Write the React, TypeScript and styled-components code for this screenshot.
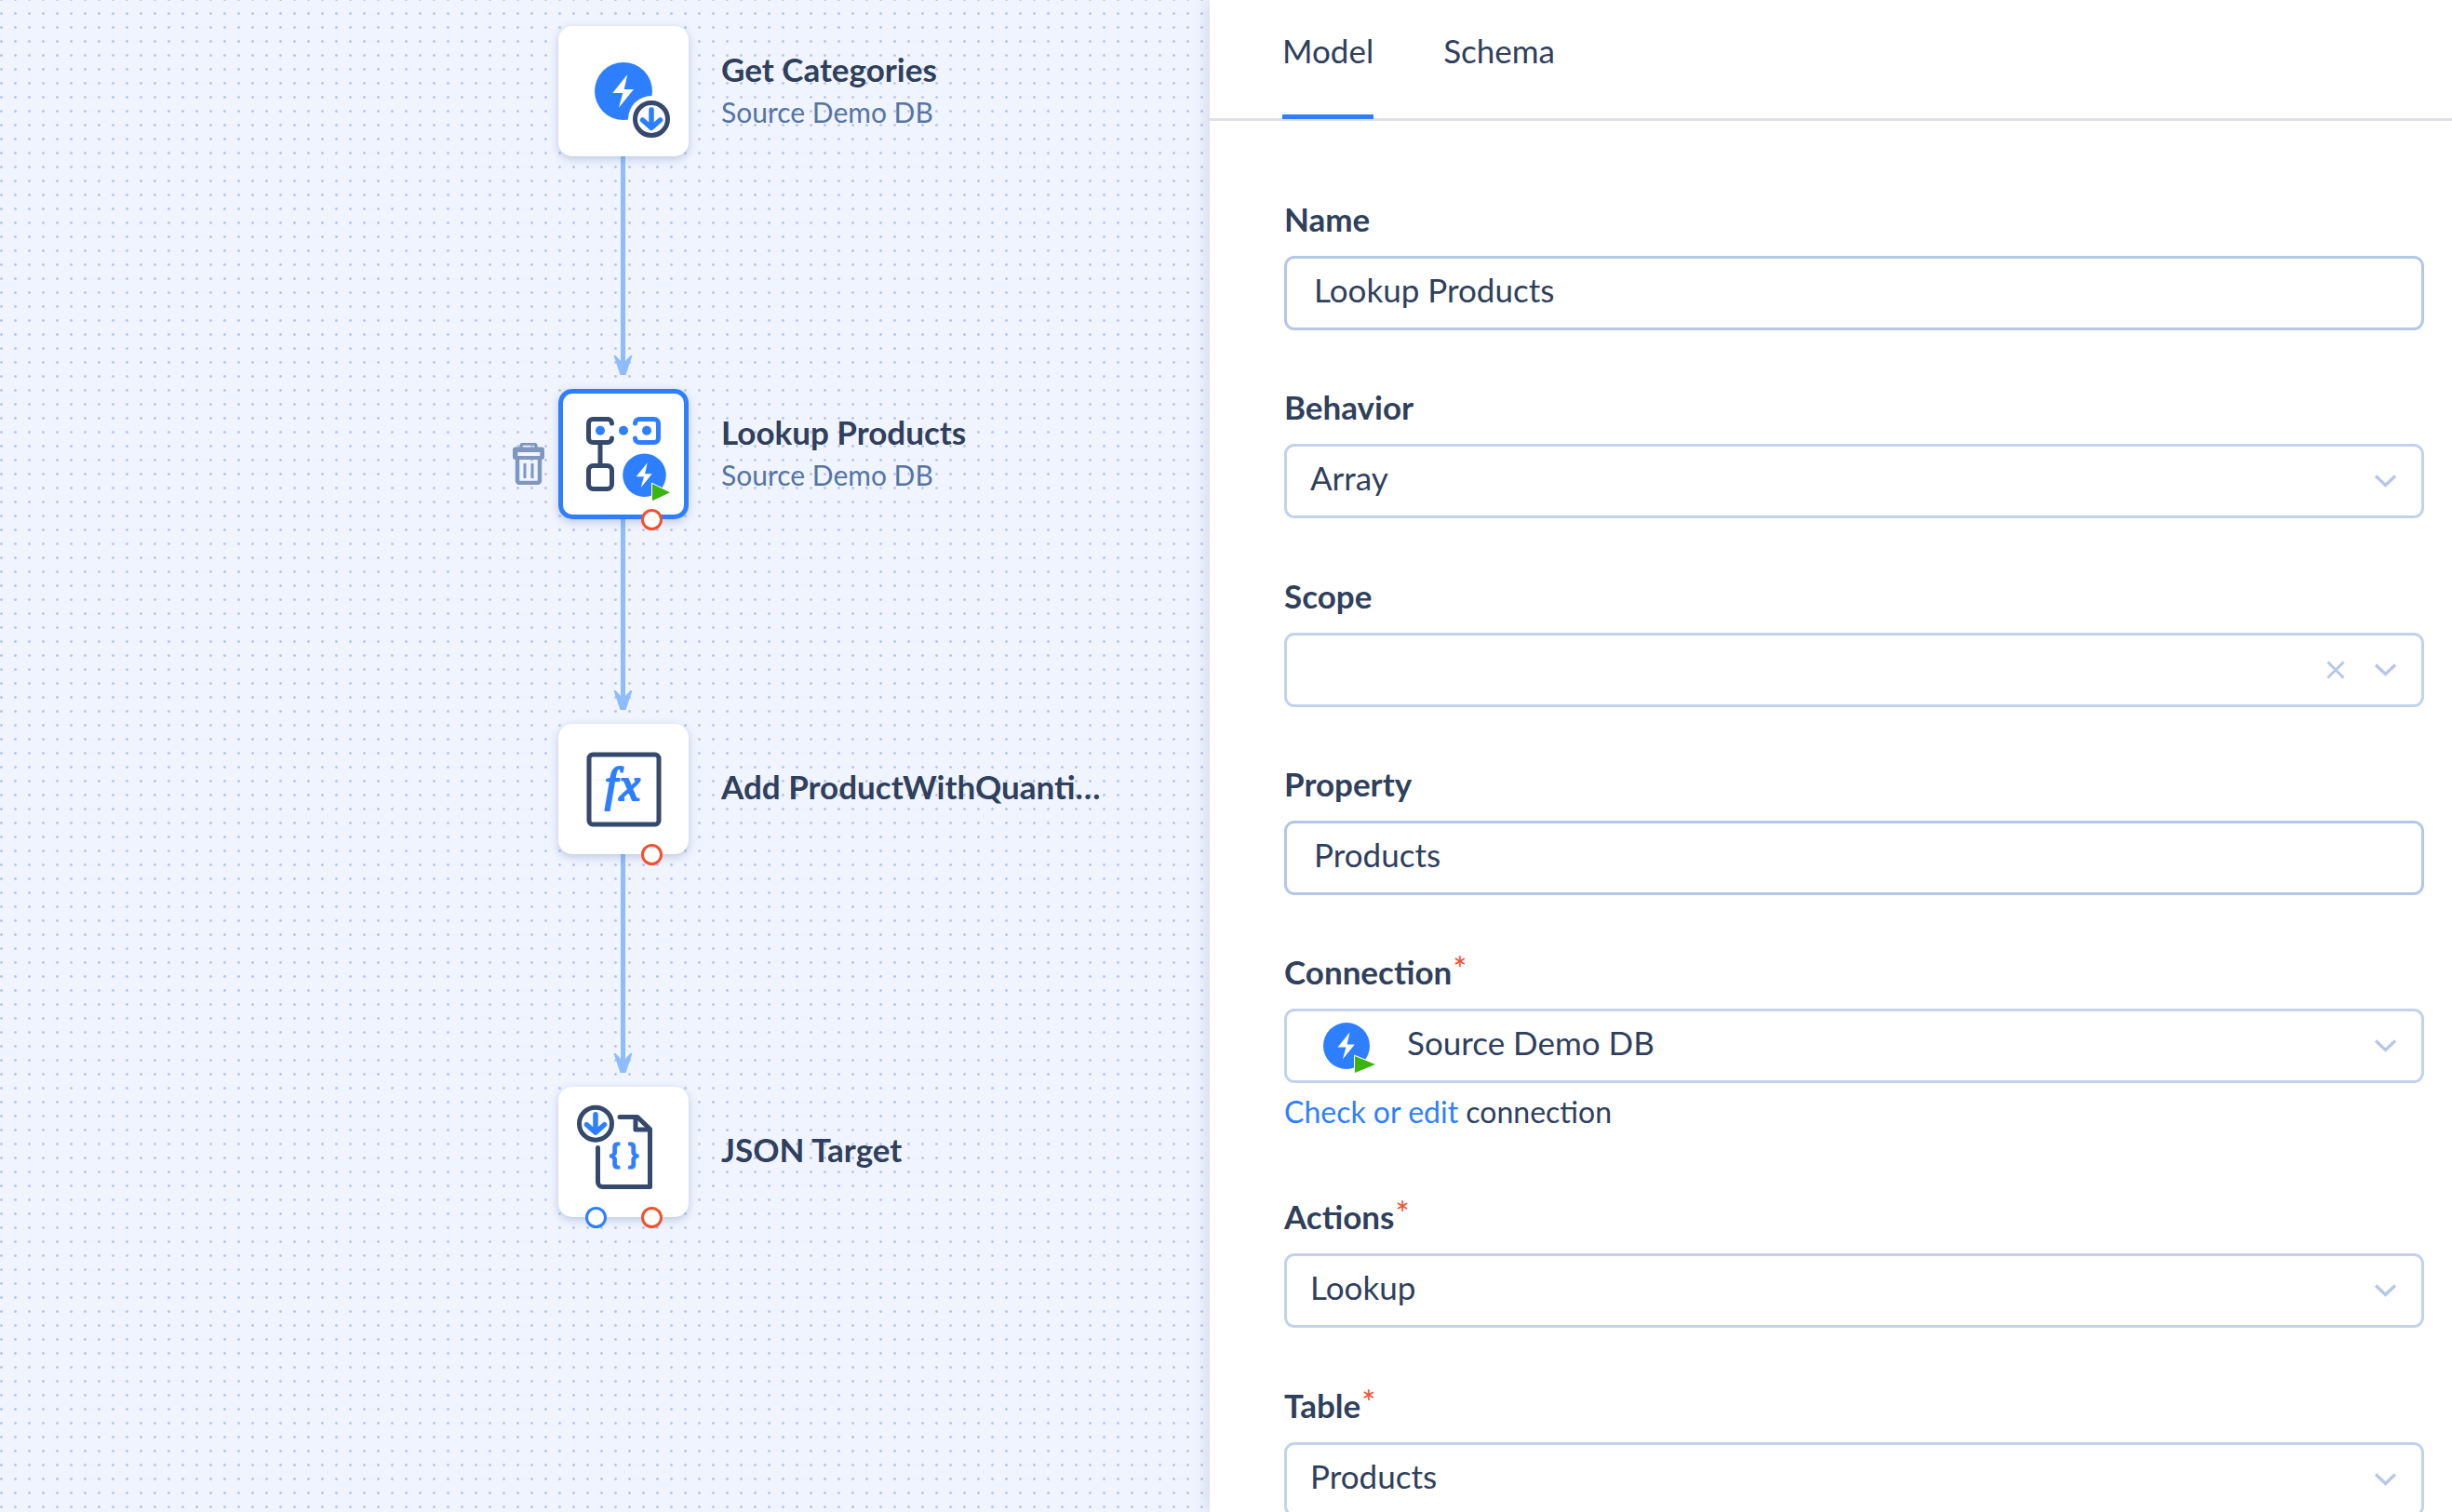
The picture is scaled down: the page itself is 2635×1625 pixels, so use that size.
import React from 'react';
import styled, { createGlobalStyle } from 'styled-components';

const GlobalStyle = createGlobalStyle`
  html, body {
    margin: 0;
    padding: 0;
    background: #ffffff;
  }
  body {
    font-family: Lato, "Open Sans", sans-serif;
    color: #2b3a55;
  }
`;

const Page = styled.div`
  width: 2635px;
  height: 1625px;
  display: flex;
  overflow: hidden;
`;

const Canvas = styled.div`
  width: 1300px;
  height: 1625px;
  flex: none;
  padding-top: 28px;
  box-sizing: border-box;
  background-color: #eff4ff;
  background-image: radial-gradient(circle, #b8c8ea 1.1px, transparent 1.7px);
  background-size: 15px 15px;
  background-position: 9px 7px;
`;

const NodeRow = styled.div`
  display: grid;
  grid-template-columns: 600px 140px 1fr;
  align-items: center;
  height: 140px;
`;

const TrashSlot = styled.div`
  justify-self: end;
  margin: 20px 15px 0 0;
  display: flex;
`;

const Node = styled.div<{ $selected?: boolean }>`
  position: relative;
  width: 140px;
  height: 140px;
  border-radius: 15px;
  background: #ffffff;
  box-shadow: ${(p) => (p.$selected ? 'inset 0 0 0 5px #2e7fff, ' : '')}0 3px 10px rgba(60, 85, 140, 0.28);
  z-index: 1;

  svg {
    display: block;
  }
`;

const Port = styled.span<{ $left: number; $color: string }>`
  position: absolute;
  left: ${(p) => p.$left - 11.5}px;
  bottom: -11.5px;
  width: 23px;
  height: 23px;
  box-sizing: border-box;
  border-radius: 50%;
  border: 3px solid ${(p) => p.$color};
  background: #ffffff;
`;

const Label = styled.div<{ $single?: boolean }>`
  margin-left: 35px;
  padding-bottom: ${(p) => (p.$single ? 6 : 2)}px;
  min-width: 0;
  display: flex;
  flex-direction: column;
`;

const NodeTitle = styled.div`
  font-size: 35px;
  line-height: 46px;
  font-weight: 700;
  color: #2f3f5c;
  white-space: nowrap;
`;

const NodeSubtitle = styled.div`
  font-size: 30px;
  line-height: 46px;
  color: #5674a3;
`;

const ConnectorRow = styled.div<{ $height: number }>`
  height: ${(p) => p.$height}px;
  padding-left: 658px;

  svg {
    display: block;
  }
`;

const Panel = styled.div`
  flex: 1;
  position: relative;
  background: #ffffff;
  box-shadow: -4px 0 14px rgba(60, 85, 140, 0.15);
`;

const Tabs = styled.div`
  height: 127px;
  box-sizing: content-box;
  padding-left: 78px;
  display: flex;
  gap: 75px;
  border-bottom: 3px solid #dfe2ea;
`;

const Tab = styled.div<{ $active?: boolean }>`
  height: 128px;
  box-sizing: border-box;
  padding-top: 30px;
  font-size: 35px;
  line-height: 48px;
  color: #2f3f5c;
  border-bottom: 5px solid ${(p) => (p.$active ? '#2e7fff' : 'transparent')};
`;

const Form = styled.div`
  padding: 80px 30px 0 80px;
  display: flex;
  flex-direction: column;
  gap: 57.3px;
`;

const Field = styled.div`
  display: flex;
  flex-direction: column;
`;

const FieldLabel = styled.div`
  height: 50px;
  margin-bottom: 15px;
  font-size: 35px;
  line-height: 50px;
  font-weight: 700;
  color: #2f3f5c;
`;

const Required = styled.sup`
  color: #f0512f;
  font-size: 36px;
  font-weight: 400;
  line-height: 0;
  vertical-align: 3px;
  margin-left: 1px;
`;

const Control = styled.div<{ $strong?: boolean; $inset?: number }>`
  height: 80px;
  box-sizing: border-box;
  display: flex;
  align-items: center;
  padding: 0 26px 0 ${(p) => p.$inset ?? 25}px;
  border: 3px solid ${(p) => (p.$strong ? '#b4c7e6' : '#c3d2ec')};
  border-radius: 11px;
  font-size: 35px;
  color: #2f3f5c;
`;

const ControlText = styled.span`
  flex: 1;
  white-space: nowrap;
  padding-bottom: 8px;
`;

const ControlIcon = styled.span`
  display: flex;
  margin-right: 26px;

  svg {
    display: block;
  }
`;

const ClearIcon = styled.span`
  display: flex;
  margin-right: 31px;
`;

const Help = styled.div`
  margin-top: 12px;
  height: 49px;
  font-size: 32px;
  line-height: 38px;
  color: #2f3f5c;
`;

const HelpLink = styled.a`
  color: #2e7fff;
  text-decoration: none;
`;

const INK = '#34496b';
const BLUE = '#2e7fff';
const GREEN = '#3ab50f';

const Bolt = ({ cx, cy, r }: { cx: number; cy: number; r: number }) => (
  <g transform={`translate(${cx} ${cy}) scale(${r / 31}) translate(-70 -70)`}>
    <circle cx="70" cy="70" r="31" fill={BLUE} />
    <polygon points="74.3,52 58.3,72 69.3,72 65,87.7 81,68 70.7,68" fill="#ffffff" />
  </g>
);

const DownRing = ({ cx, cy }: { cx: number; cy: number }) => (
  <g fill="none" strokeLinecap="round" strokeLinejoin="round">
    <circle cx={cx} cy={cy} r="17.5" stroke={INK} strokeWidth="5" />
    <path d={`M${cx} ${cy - 10}V${cy + 9}M${cx - 9.5} ${cy + 1}L${cx} ${cy + 9.5}L${cx + 9.5} ${cy + 1}`} stroke={BLUE} strokeWidth="5.5" />
  </g>
);

const SourceIcon = () => (
  <svg width="140" height="140" viewBox="0 0 140 140">
    <Bolt cx={70} cy={70} r={31} />
    <circle cx="100" cy="100" r="25" fill="#ffffff" />
    <DownRing cx={100} cy={100} />
  </svg>
);

const LookupIcon = () => (
  <svg width="140" height="140" viewBox="0 0 140 140">
    <g fill="none" strokeWidth="5" strokeLinecap="round">
      <path d="M57.5 37a4.5 4.5 0 0 0-4.5-4.5H37a4.5 4.5 0 0 0-4.5 4.5V53a4.5 4.5 0 0 0 4.5 4.5H53a4.5 4.5 0 0 0 4.5-4.5" stroke={INK} />
      <path d="M82.5 37a4.5 4.5 0 0 1 4.5-4.5H103a4.5 4.5 0 0 1 4.5 4.5V53a4.5 4.5 0 0 1-4.5 4.5H87a4.5 4.5 0 0 1-4.5-4.5" stroke={BLUE} />
      <path d="M45 60V80" stroke={INK} />
      <rect x="32.5" y="82.5" width="25" height="25" rx="5" stroke={INK} />
    </g>
    <circle cx="45" cy="44.7" r="5" fill={BLUE} />
    <circle cx="70" cy="44.7" r="5" fill={BLUE} />
    <circle cx="95" cy="44.7" r="5" fill={BLUE} />
    <Bolt cx={92.5} cy={92.7} r={23.3} />
    <polygon points="101,102 101,120.3 120,111.3" fill={GREEN} stroke="#ffffff" strokeWidth="2" paintOrder="stroke" />
  </svg>
);

const FxText = styled.text`
  font-family: "Liberation Serif", serif;
  font-style: italic;
  font-weight: 400;
  font-size: 50px;
  letter-spacing: 2px;
  fill: ${BLUE};
  stroke: ${BLUE};
  stroke-width: 2.2px;
  stroke-linejoin: round;
`;

const FunctionIcon = () => (
  <svg width="140" height="140" viewBox="0 0 140 140">
    <rect x="33" y="33" width="75" height="75" rx="4" fill="none" stroke={INK} strokeWidth="5" />
    <FxText x="70" y="82" textAnchor="middle">fx</FxText>
  </svg>
);

const BraceText = styled.text`
  font-family: "Liberation Sans", sans-serif;
  font-weight: 700;
  font-size: 30px;
  fill: ${BLUE};
  stroke: ${BLUE};
  stroke-width: 0.8px;
`;

const JsonIcon = () => (
  <svg width="140" height="140" viewBox="0 0 140 140">
    <g fill="none" stroke={INK} strokeWidth="5" strokeLinecap="round" strokeLinejoin="round">
      <path d="M66 32.5H85L98.5 45.5V107.5H47.5a5 5 0 0 1-5-5V65.5" />
      <path d="M83 34V46H98" />
    </g>
    <BraceText x="70.5" y="82" textAnchor="middle">{'{ }'}</BraceText>
    <DownRing cx={40} cy={39.7} />
  </svg>
);

const TrashIcon = () => (
  <svg width="34" height="45" viewBox="0 0 34 45">
    <path d="M9 6V3.5A2.5 2.5 0 0 1 11.5 1h11A2.5 2.5 0 0 1 25 3.5V6" fill="none" stroke="#7f96bf" strokeWidth="3.5" />
    <rect x="0" y="4.5" width="34" height="13.5" rx="3" fill="#7f96bf" />
    <rect x="5.3" y="10" width="24" height="4" fill="#eff4ff" />
    <path d="M5 17V40.5a2.5 2.5 0 0 0 2.5 2.5h19a2.5 2.5 0 0 0 2.5-2.5V17" fill="none" stroke="#7f96bf" strokeWidth="4.5" />
    <path d="M13 22v16M21 22v16" fill="none" stroke="#7f96bf" strokeWidth="3" />
  </svg>
);

const Connector = ({ height }: { height: number }) => {
  const tip = height - 15;
  return (
    <ConnectorRow $height={height}>
      <svg width="24" height={height} viewBox={`0 0 24 ${height}`}>
        <rect x="9" y="-3" width="5" height={tip - 5} fill="#8fbcff" />
        <polygon
          points={`8.5,${tip} 1.5,${tip - 21} 3.5,${tip - 21} 9,${tip - 15} 14,${tip - 15} 19.5,${tip - 21} 21.5,${tip - 21} 14.5,${tip}`}
          fill="#8fbcff"
        />
      </svg>
    </ConnectorRow>
  );
};

const Chevron = () => (
  <svg width="25" height="16" viewBox="0 0 25 16" fill="none" stroke="#b6c8e6" strokeWidth="3.4">
    <path d="M2 2.5L12.5 12.5L23 2.5" />
  </svg>
);

const ClearX = () => (
  <svg width="20" height="20" viewBox="0 0 20 20" fill="none" stroke="#b6c8e6" strokeWidth="3">
    <path d="M1.5 1.5L18.5 18.5M18.5 1.5L1.5 18.5" />
  </svg>
);

const ConnectionIcon = () => (
  <svg width="64" height="62" viewBox="0 -6 64 62">
    <Bolt cx={25} cy={25} r={25} />
    <polygon points="34,36 34,54 56,45" fill={GREEN} stroke="#ffffff" strokeWidth="2" paintOrder="stroke" />
  </svg>
);

const App = () => {
  return (
    <Page>
      <GlobalStyle />
      <Canvas>
        <NodeRow>
          <span />
          <Node>
            <SourceIcon />
          </Node>
          <Label>
            <NodeTitle>Get Categories</NodeTitle>
            <NodeSubtitle>Source Demo DB</NodeSubtitle>
          </Label>
        </NodeRow>
        <Connector height={250} />
        <NodeRow>
          <TrashSlot>
            <TrashIcon />
          </TrashSlot>
          <Node $selected>
            <LookupIcon />
            <Port $left={100} $color="#f0512f" />
          </Node>
          <Label>
            <NodeTitle>Lookup Products</NodeTitle>
            <NodeSubtitle>Source Demo DB</NodeSubtitle>
          </Label>
        </NodeRow>
        <Connector height={220} />
        <NodeRow>
          <span />
          <Node>
            <FunctionIcon />
            <Port $left={100} $color="#f0512f" />
          </Node>
          <Label $single>
            <NodeTitle>Add ProductWithQuanti…</NodeTitle>
          </Label>
        </NodeRow>
        <Connector height={250} />
        <NodeRow>
          <span />
          <Node>
            <JsonIcon />
            <Port $left={40} $color={BLUE} />
            <Port $left={100} $color="#f0512f" />
          </Node>
          <Label $single>
            <NodeTitle>JSON Target</NodeTitle>
          </Label>
        </NodeRow>
      </Canvas>
      <Panel>
        <Tabs>
          <Tab $active>Model</Tab>
          <Tab>Schema</Tab>
        </Tabs>
        <Form>
          <Field>
            <FieldLabel>Name</FieldLabel>
            <Control $strong $inset={29}>
              <ControlText>Lookup Products</ControlText>
            </Control>
          </Field>
          <Field>
            <FieldLabel>Behavior</FieldLabel>
            <Control>
              <ControlText>Array</ControlText>
              <Chevron />
            </Control>
          </Field>
          <Field>
            <FieldLabel>Scope</FieldLabel>
            <Control>
              <ControlText />
              <ClearIcon>
                <ClearX />
              </ClearIcon>
              <Chevron />
            </Control>
          </Field>
          <Field>
            <FieldLabel>Property</FieldLabel>
            <Control $strong $inset={29}>
              <ControlText>Products</ControlText>
            </Control>
          </Field>
          <Field>
            <FieldLabel>
              Connection<Required>*</Required>
            </FieldLabel>
            <Control $inset={39}>
              <ControlIcon>
                <ConnectionIcon />
              </ControlIcon>
              <ControlText>Source Demo DB</ControlText>
              <Chevron />
            </Control>
            <Help>
              <HelpLink href="#">Check or edit</HelpLink> connection
            </Help>
          </Field>
          <Field>
            <FieldLabel>
              Actions<Required>*</Required>
            </FieldLabel>
            <Control>
              <ControlText>Lookup</ControlText>
              <Chevron />
            </Control>
          </Field>
          <Field>
            <FieldLabel>
              Table<Required>*</Required>
            </FieldLabel>
            <Control>
              <ControlText>Products</ControlText>
              <Chevron />
            </Control>
          </Field>
        </Form>
      </Panel>
    </Page>
  );
};

export default App;
